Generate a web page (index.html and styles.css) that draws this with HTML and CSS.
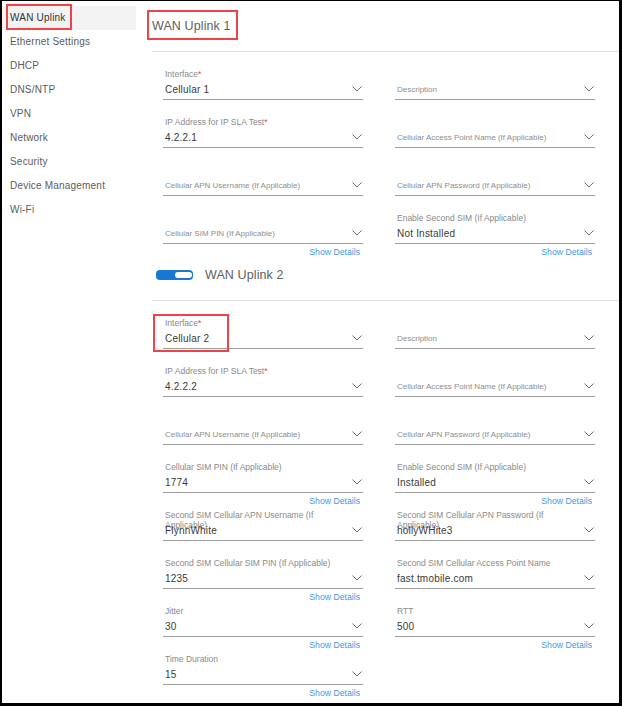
FILE: index.html
```html
<!DOCTYPE html>
<html lang="en">
<head>
<meta charset="utf-8">
<title>WAN Uplink</title>
<link rel="stylesheet" href="styles.css">
</head>
<body>
<div class="frame">
  <nav class="sidebar">
    <div class="nav-item active">WAN Uplink<span class="callout nav-callout"></span></div>
    <div class="nav-item">Ethernet Settings</div>
    <div class="nav-item">DHCP</div>
    <div class="nav-item">DNS/NTP</div>
    <div class="nav-item">VPN</div>
    <div class="nav-item">Network</div>
    <div class="nav-item">Security</div>
    <div class="nav-item">Device Management</div>
    <div class="nav-item">Wi-Fi</div>
  </nav>

  <main class="main">
    <section class="section">
      <div class="sec-head">
        <span class="sec-title">WAN Uplink 1</span>
        <span class="callout title-callout"></span>
      </div>
      <hr class="rule">
      <div class="grid">
        <div class="field">
          <div class="f-label">Interface<span class="req">*</span></div>
          <div class="f-control"><span class="f-value">Cellular 1</span><svg class="chev" viewBox="0 0 10 6"><polyline points="0.5,0.5 5,5 9.5,0.5"/></svg></div>
          <div class="f-foot"></div>
        </div>
        <div class="field">
          <div class="f-label"></div>
          <div class="f-control"><span class="f-ph">Description</span><svg class="chev" viewBox="0 0 10 6"><polyline points="0.5,0.5 5,5 9.5,0.5"/></svg></div>
          <div class="f-foot"></div>
        </div>

        <div class="field">
          <div class="f-label">IP Address for IP SLA Test<span class="req">*</span></div>
          <div class="f-control"><span class="f-value">4.2.2.1</span><svg class="chev" viewBox="0 0 10 6"><polyline points="0.5,0.5 5,5 9.5,0.5"/></svg></div>
          <div class="f-foot"></div>
        </div>
        <div class="field">
          <div class="f-label"></div>
          <div class="f-control"><span class="f-ph">Cellular Access Point Name (If Applicable)</span><svg class="chev" viewBox="0 0 10 6"><polyline points="0.5,0.5 5,5 9.5,0.5"/></svg></div>
          <div class="f-foot"></div>
        </div>

        <div class="field">
          <div class="f-label"></div>
          <div class="f-control"><span class="f-ph">Cellular APN Username (If Applicable)</span><svg class="chev" viewBox="0 0 10 6"><polyline points="0.5,0.5 5,5 9.5,0.5"/></svg></div>
          <div class="f-foot"></div>
        </div>
        <div class="field">
          <div class="f-label"></div>
          <div class="f-control"><span class="f-ph">Cellular APN Password (If Applicable)</span><svg class="chev" viewBox="0 0 10 6"><polyline points="0.5,0.5 5,5 9.5,0.5"/></svg></div>
          <div class="f-foot"></div>
        </div>

        <div class="field">
          <div class="f-label"></div>
          <div class="f-control"><span class="f-ph">Cellular SIM PIN (If Applicable)</span><svg class="chev" viewBox="0 0 10 6"><polyline points="0.5,0.5 5,5 9.5,0.5"/></svg></div>
          <div class="f-foot"><a class="show" href="#">Show Details</a></div>
        </div>
        <div class="field">
          <div class="f-label">Enable Second SIM (If Applicable)</div>
          <div class="f-control"><span class="f-value">Not Installed</span><svg class="chev" viewBox="0 0 10 6"><polyline points="0.5,0.5 5,5 9.5,0.5"/></svg></div>
          <div class="f-foot"><a class="show" href="#">Show Details</a></div>
        </div>
      </div>
    </section>

    <section class="section">
      <div class="sec-head">
        <span class="toggle" role="switch" aria-checked="true"><span class="knob"></span></span>
        <span class="sec-title">WAN Uplink 2</span>
      </div>
      <hr class="rule">
      <div class="grid">
        <div class="field">
          <div class="f-label">Interface<span class="req">*</span></div>
          <div class="f-control"><span class="f-value">Cellular 2</span><svg class="chev" viewBox="0 0 10 6"><polyline points="0.5,0.5 5,5 9.5,0.5"/></svg></div>
          <div class="f-foot"></div>
          <span class="callout field-callout"></span>
        </div>
        <div class="field">
          <div class="f-label"></div>
          <div class="f-control"><span class="f-ph">Description</span><svg class="chev" viewBox="0 0 10 6"><polyline points="0.5,0.5 5,5 9.5,0.5"/></svg></div>
          <div class="f-foot"></div>
        </div>

        <div class="field">
          <div class="f-label">IP Address for IP SLA Test<span class="req">*</span></div>
          <div class="f-control"><span class="f-value">4.2.2.2</span><svg class="chev" viewBox="0 0 10 6"><polyline points="0.5,0.5 5,5 9.5,0.5"/></svg></div>
          <div class="f-foot"></div>
        </div>
        <div class="field">
          <div class="f-label"></div>
          <div class="f-control"><span class="f-ph">Cellular Access Point Name (If Applicable)</span><svg class="chev" viewBox="0 0 10 6"><polyline points="0.5,0.5 5,5 9.5,0.5"/></svg></div>
          <div class="f-foot"></div>
        </div>

        <div class="field">
          <div class="f-label"></div>
          <div class="f-control"><span class="f-ph">Cellular APN Username (If Applicable)</span><svg class="chev" viewBox="0 0 10 6"><polyline points="0.5,0.5 5,5 9.5,0.5"/></svg></div>
          <div class="f-foot"></div>
        </div>
        <div class="field">
          <div class="f-label"></div>
          <div class="f-control"><span class="f-ph">Cellular APN Password (If Applicable)</span><svg class="chev" viewBox="0 0 10 6"><polyline points="0.5,0.5 5,5 9.5,0.5"/></svg></div>
          <div class="f-foot"></div>
        </div>

        <div class="field">
          <div class="f-label">Cellular SIM PIN (If Applicable)</div>
          <div class="f-control"><span class="f-value">1774</span><svg class="chev" viewBox="0 0 10 6"><polyline points="0.5,0.5 5,5 9.5,0.5"/></svg></div>
          <div class="f-foot"><a class="show" href="#">Show Details</a></div>
        </div>
        <div class="field">
          <div class="f-label">Enable Second SIM (If Applicable)</div>
          <div class="f-control"><span class="f-value">Installed</span><svg class="chev" viewBox="0 0 10 6"><polyline points="0.5,0.5 5,5 9.5,0.5"/></svg></div>
          <div class="f-foot"><a class="show" href="#">Show Details</a></div>
        </div>

        <div class="field">
          <div class="f-label">Second SIM Cellular APN Username (If Applicable)</div>
          <div class="f-control"><span class="f-value">FlynnWhite</span><svg class="chev" viewBox="0 0 10 6"><polyline points="0.5,0.5 5,5 9.5,0.5"/></svg></div>
          <div class="f-foot"></div>
        </div>
        <div class="field">
          <div class="f-label">Second SIM Cellular APN Password (If Applicable)</div>
          <div class="f-control"><span class="f-value">hollyWHite3</span><svg class="chev" viewBox="0 0 10 6"><polyline points="0.5,0.5 5,5 9.5,0.5"/></svg></div>
          <div class="f-foot"></div>
        </div>

        <div class="field">
          <div class="f-label">Second SIM Cellular SIM PIN (If Applicable)</div>
          <div class="f-control"><span class="f-value">1235</span><svg class="chev" viewBox="0 0 10 6"><polyline points="0.5,0.5 5,5 9.5,0.5"/></svg></div>
          <div class="f-foot"><a class="show" href="#">Show Details</a></div>
        </div>
        <div class="field">
          <div class="f-label">Second SIM Cellular Access Point Name</div>
          <div class="f-control"><span class="f-value">fast.tmobile.com</span><svg class="chev" viewBox="0 0 10 6"><polyline points="0.5,0.5 5,5 9.5,0.5"/></svg></div>
          <div class="f-foot"></div>
        </div>

        <div class="field">
          <div class="f-label">Jitter</div>
          <div class="f-control"><span class="f-value">30</span><svg class="chev" viewBox="0 0 10 6"><polyline points="0.5,0.5 5,5 9.5,0.5"/></svg></div>
          <div class="f-foot"><a class="show" href="#">Show Details</a></div>
        </div>
        <div class="field">
          <div class="f-label">RTT</div>
          <div class="f-control"><span class="f-value">500</span><svg class="chev" viewBox="0 0 10 6"><polyline points="0.5,0.5 5,5 9.5,0.5"/></svg></div>
          <div class="f-foot"><a class="show" href="#">Show Details</a></div>
        </div>

        <div class="field">
          <div class="f-label">Time Duration</div>
          <div class="f-control"><span class="f-value">15</span><svg class="chev" viewBox="0 0 10 6"><polyline points="0.5,0.5 5,5 9.5,0.5"/></svg></div>
          <div class="f-foot"><a class="show" href="#">Show Details</a></div>
        </div>
      </div>
    </section>
  </main>
</div>
</body>
</html>
```
FILE: styles.css
```css
* {
  box-sizing: border-box;
}

html,
body {
  margin: 0;
  padding: 0;
  background: #fff;
}

body {
  font-family: "Liberation Sans", Arial, sans-serif;
}

.frame {
  width: 622px;
  height: 706px;
  border-style: solid;
  border-color: #000;
  border-width: 1px 3px 3px 2px;
  display: flex;
  overflow: hidden;
  background: #fff;
}

/* Sidebar */
.sidebar {
  width: 134px;
  flex: none;
  padding-top: 5px;
}

.nav-item {
  position: relative;
  height: 24px;
  line-height: 24px;
  padding-left: 8px;
  font-size: 10px;
  letter-spacing: 0.2px;
  color: #5c5c5c;
  white-space: nowrap;
}

.nav-item.active {
  background: #f3f3f3;
  color: #333;
}

/* Annotation boxes */
.callout {
  position: absolute;
  border: 2px solid #ef4249;
  pointer-events: none;
}

.nav-callout {
  left: 4px;
  top: -2px;
  width: 66px;
  height: 26px;
}

.title-callout {
  left: -5px;
  top: -1px;
  width: 91px;
  height: 30px;
}

.field-callout {
  left: -10px;
  top: -3px;
  width: 76px;
  height: 38px;
}

/* Main */
.main {
  flex: 1;
  min-width: 0;
  padding: 10px 0 0 16px;
}

.sec-head {
  position: relative;
  height: 30px;
  display: flex;
  align-items: center;
}

.sec-title {
  font-size: 12.5px;
  color: #5e5e5e;
  letter-spacing: 0.1px;
}

.toggle {
  width: 37px;
  height: 10px;
  border-radius: 4px;
  background: #1877d2;
  margin: 0 12px 0 4px;
  display: flex;
  align-items: center;
  justify-content: flex-end;
  padding-right: 1px;
}

.knob {
  width: 17px;
  height: 6px;
  border-radius: 3px;
  background: #fff;
}

.rule {
  height: 0;
  border: 0;
  border-top: 1px solid #dedede;
  margin: 10px 0 16px;
}

.grid {
  display: grid;
  grid-template-columns: 200px 200px;
  column-gap: 32px;
  margin-left: 11px;
}

.field {
  position: relative;
  height: 48px;
}

.f-label {
  height: 12px;
  padding: 1px 20px 0 2px;
  font-size: 8.5px;
  line-height: 10px;
  color: #8a8a8a;
}

.req {
  color: #e0474c;
}

.f-control {
  height: 20px;
  border-bottom: 1px solid #9e9e9e;
  display: flex;
  align-items: center;
  padding: 0 1px 1px 2px;
}

.f-value {
  flex: 1;
  font-size: 10px;
  letter-spacing: 0.2px;
  color: #3a3a3a;
  white-space: nowrap;
}

.f-ph {
  flex: 1;
  font-size: 8px;
  color: #8e8e8e;
  white-space: nowrap;
}

.chev {
  width: 10px;
  height: 6px;
  flex: none;
  fill: none;
  stroke: #6e6e6e;
  stroke-width: 1;
}

.f-foot {
  height: 16px;
  display: flex;
  justify-content: flex-end;
  align-items: center;
  padding-right: 3px;
}

.show {
  font-size: 8.7px;
  color: #3c9be6;
  text-decoration: none;
}
```
